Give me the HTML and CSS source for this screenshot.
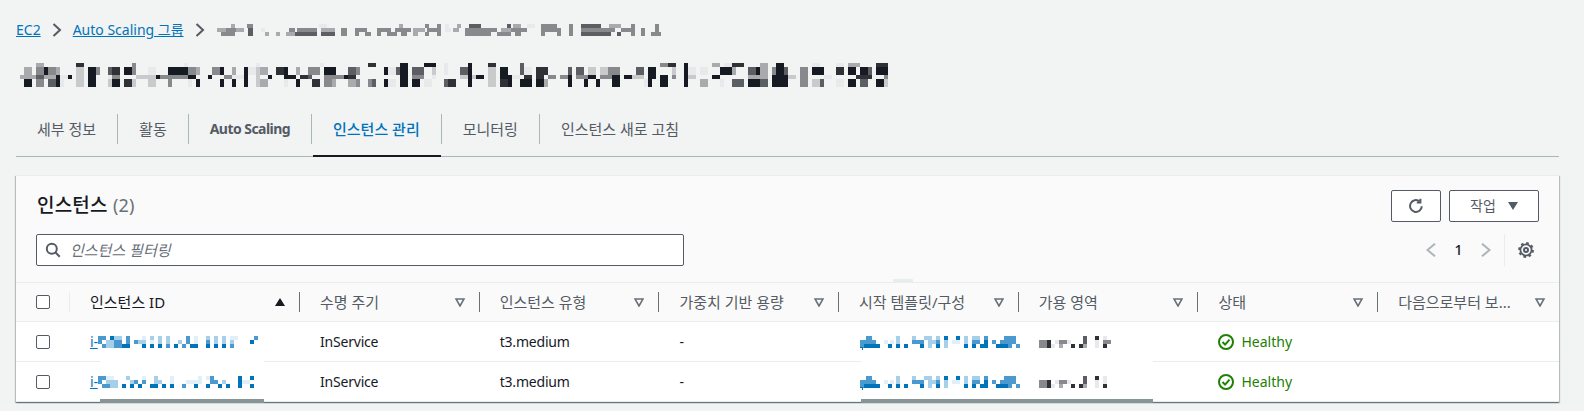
FILE: index.html
```html
<!DOCTYPE html>
<html lang="ko">
<head>
<meta charset="utf-8">
<title>인스턴스 관리</title>
<link rel="stylesheet" href="styles.css">
</head>
<body>
<nav class="crumbs">
  <a href="#">EC2</a>
  <svg class="crumb-sep" width="10" height="14" viewBox="0 0 10 14"><path d="M1.5 1l6.5 6-6.5 6"/></svg>
  <a href="#">Auto Scaling 그룹</a>
  <svg class="crumb-sep" width="10" height="14" viewBox="0 0 10 14"><path d="M1.5 1l6.5 6-6.5 6"/></svg>
  <svg class="mosaic crumb-mosaic" width="460" height="12" viewBox="0 0 460 12">
    <g class="w4">
      <path class="a" d="M108 2h8M234 2h4M316 2h8"/>
      <path class="c" d="M20 2h4M188 2h4M246 2h4M302 2h8M398 2h12"/>
      <path class="d" d="M36 2h6M214 2h4M226 2h4M330 2h16M358 2h4M420 2h4M444 2h4"/>
      <path class="e" d="M258 2h12M296 2h4M370 2h20"/>
      <path class="c" d="M6 6h9M25 6h8M110 6h14M202 6h12M242 6h6M290 6h10M398 6h6"/>
      <path class="d" d="M15 6h10M78 6h6M86 6h20M130 6h6M144 6h12M166 6h14M184 6h16M216 6h14M254 6h32M300 6h16M330 6h20M358 6h4M370 6h34M410 6h14M430 6h4M444 6h4"/>
      <path class="e" d="M37 6h5"/>
      <path class="a" d="M50 6h4M234 6h6"/>
      <path class="d" d="M10 10h14M130 10h6M144 10h4M154 10h6M166 10h4M176 10h10M190 10h6M214 10h4M226 10h4M254 10h26M286 10h14M304 10h6M330 10h4M346 10h4M358 10h4M420 10h4M430 10h4M440 10h10"/>
      <path class="e" d="M37 10h5M84 10h22M110 10h14M370 10h30M406 10h4"/>
      <path class="c" d="M54 10h4M65 10h4M75 10h9M202 10h5"/>
    </g>
  </svg>
</nav>
<h1 class="page-title" aria-label="Auto Scaling group">
  <svg class="mosaic" width="880" height="24" viewBox="0 0 880 24">
    <g class="w4">
      <path class="c" d="M20 2h8M744 2h8M832 2h12M696 2h8"/>
      <path class="d" d="M116 2h4M644 2h8"/>
      <path class="a" d="M168 2h4M240 2h4M304 2h4M428 2h4M708 2h8M796 2h8M820 2h8"/>
      <path class="e" d="M504 2h4"/>
      <path class="f" d="M60 2h8M352 2h8M472 2h8M652 2h8M716 2h12M860 2h12"/>
      <path class="g" d="M384 2h8M408 2h12M452 2h4M668 2h4M760 2h8"/>
    </g>
    <g class="w8">
      <path class="a" d="M132 8h8M232 8h8M372 8h8M428 8h4M508 8h8M672 8h8M684 8h8"/>
      <path class="b" d="M60 8h8M240 8h4M416 8h4M472 8h8M572 8h8M584 8h8M656 8h4"/>
      <path class="c" d="M8 8h8M40 8h4M180 8h4M216 8h4M244 8h8M280 8h4M716 8h4M744 8h8"/>
      <path class="d" d="M20 8h8M32 8h8M80 8h4M116 8h4M172 8h8M196 8h8M292 8h12M340 8h4M592 8h12M756 8h4M784 8h8"/>
      <path class="e" d="M92 8h4M332 8h8M380 8h4M396 8h12M444 8h8M504 8h4M552 8h4M560 8h8M620 8h8M732 8h8M768 8h4M852 8h4"/>
      <path class="f" d="M96 8h8M260 8h8M520 8h12M820 8h8"/>
      <path class="g" d="M28 8h4M72 8h8M108 8h8M152 8h20M204 8h4M228 8h4M268 8h4M308 8h12M368 8h4M384 8h8M452 8h4M484 8h8M632 8h8M668 8h4M704 8h12M740 8h4M760 8h8M796 8h12M832 8h8M844 8h8M860 8h12"/>
    </g>
    <g class="w4">
      <path class="a" d="M44 14h8M92 14h4M216 14h12M416 14h4M496 14h8M808 14h8"/>
      <path class="b" d="M60 14h8M120 14h20M240 14h4M444 14h8M456 14h4M472 14h8M616 14h12M672 14h8M772 14h8"/>
      <path class="c" d="M4 14h16M28 14h12M732 14h20"/>
      <path class="d" d="M96 14h8M144 14h28M208 14h8M308 14h20M396 14h12M532 14h8M544 14h8M560 14h12M584 14h12M656 14h4M784 14h8M868 14h4"/>
      <path class="e" d="M20 14h8M292 14h4"/>
      <path class="f" d="M284 14h8M332 14h8M508 14h8M520 14h8M840 14h16"/>
      <path class="g" d="M40 14h4M52 14h4M72 14h8M140 14h4M172 14h8M192 14h4M228 14h4M252 14h4M268 14h12M328 14h4M384 14h8M452 14h4M460 14h8M484 14h12M552 14h4M572 14h8M596 14h8M608 14h8M632 14h8M644 14h8M668 14h4M696 14h8M756 14h16"/>
    </g>
    <g class="w8">
      <path class="a" d="M44 20h4M172 20h4M268 20h4M372 20h8M408 20h8M628 20h4M704 20h4M820 20h8"/>
      <path class="b" d="M60 20h8M92 20h4M116 20h4M132 20h8M240 20h4M472 20h8M796 20h8M868 20h4"/>
      <path class="c" d="M244 20h8M316 20h4M332 20h8M528 20h4M684 20h8"/>
      <path class="d" d="M20 20h8M152 20h4M308 20h8M340 20h4M352 20h4M784 20h8"/>
      <path class="e" d="M32 20h8M356 20h4M428 20h4M716 20h12M744 20h8M804 20h4M844 20h8"/>
      <path class="f" d="M108 20h8M296 20h8M432 20h8M484 20h8"/>
      <path class="g" d="M8 20h8M40 20h4M72 20h8M96 20h8M180 20h4M204 20h4M216 20h4M228 20h4M280 20h4M368 20h4M384 20h8M396 20h8M452 20h4M492 20h4M504 20h12M520 20h8M552 20h4M568 20h4M580 20h4M596 20h8M632 20h4M644 20h8M668 20h4M732 20h12M756 20h16M832 20h8M860 20h8"/>
    </g>
  </svg>
</h1>
<ul class="tabs">
  <li class="tab"><span class="ko">세부 정보</span></li>
  <li class="tab"><span class="ko">활동</span></li>
  <li class="tab"><span class="tab-strong">Auto Scaling</span></li>
  <li class="tab tab-active"><span class="ko">인스턴스 관리</span></li>
  <li class="tab"><span class="ko">모니터링</span></li>
  <li class="tab tab-last"><span class="ko">인스턴스 새로 고침</span></li>
</ul>
<section class="card">
  <header class="card-head">
    <div class="head-row">
      <h2 class="card-title">인스턴스 <span class="count">(2)</span></h2>
      <div class="actions">
        <button class="btn btn-icon" aria-label="새로 고침">
          <svg width="16" height="16" viewBox="0 0 16 16"><path class="ico" d="M13.8 8.2a5.9 5.9 0 1 1-2.2-4.8"/><path class="ico" d="M12.4.8v3.6H8.8"/></svg>
        </button>
        <button class="btn btn-menu">작업
          <svg width="10" height="8" viewBox="0 0 10 8"><path class="solid" d="M0 0h10L5 8z"/></svg>
        </button>
      </div>
    </div>
    <div class="tool-row">
      <label class="search">
        <svg width="16" height="16" viewBox="0 0 16 16"><circle class="ico" cx="6.8" cy="6.8" r="5"/><path class="ico" d="M10.5 10.5l4.3 4.3"/></svg>
        <input class="search-input" placeholder="인스턴스 필터링">
      </label>
      <div class="pager">
        <svg class="chev" width="10" height="14" viewBox="0 0 10 14"><path d="M9 0.7L1.5 7 9 13.3"/></svg>
        <span class="page-num">1</span>
        <svg class="chev" width="10" height="14" viewBox="0 0 10 14"><path d="M1 0.7L8.5 7 1 13.3"/></svg>
        <span class="pager-div">
          <svg width="16" height="16" viewBox="0 0 16 16"><circle class="ico" cx="8" cy="8" r="2"/><circle class="ico thin" cx="8" cy="8" r="5.6"/><circle class="teeth" cx="8" cy="8" r="6.9"/></svg>
        </span>
      </div>
    </div>
  </header>
  <table class="grid">
    <colgroup>
      <col class="c-check"><col class="c-id"><col class="c-n"><col class="c-n"><col class="c-n"><col class="c-n"><col class="c-n"><col class="c-n"><col>
    </colgroup>
    <thead>
      <tr>
        <th><div class="th-box"><span class="check"></span></div></th>
        <th><div class="th-in th-sorted"><span class="ko">인스턴스 ID</span><svg width="10" height="8" viewBox="0 0 10 8"><path class="sorted" d="M5 0l5 8H0z"/></svg></div></th>
        <th><div class="th-in"><span class="ko">수명 주기</span><svg class="filter" width="10" height="9" viewBox="0 0 10 9"><path d="M1 1h8L5 8z"/></svg></div></th>
        <th><div class="th-in"><span class="ko">인스턴스 유형</span><svg class="filter" width="10" height="9" viewBox="0 0 10 9"><path d="M1 1h8L5 8z"/></svg></div></th>
        <th><div class="th-in"><span class="ko">가중치 기반 용량</span><svg class="filter" width="10" height="9" viewBox="0 0 10 9"><path d="M1 1h8L5 8z"/></svg></div></th>
        <th><div class="th-in"><span class="ko">시작 템플릿/구성</span><svg class="filter" width="10" height="9" viewBox="0 0 10 9"><path d="M1 1h8L5 8z"/></svg></div></th>
        <th><div class="th-in"><span class="ko">가용 영역</span><svg class="filter" width="10" height="9" viewBox="0 0 10 9"><path d="M1 1h8L5 8z"/></svg></div></th>
        <th><div class="th-in"><span class="ko">상태</span><svg class="filter" width="10" height="9" viewBox="0 0 10 9"><path d="M1 1h8L5 8z"/></svg></div></th>
        <th><div class="th-in th-last"><span class="ko">다음으로부터 보...</span><svg class="filter" width="10" height="9" viewBox="0 0 10 9"><path d="M1 1h8L5 8z"/></svg></div></th>
      </tr>
    </thead>
    <tbody>
      <tr>
        <td class="td-check"><span class="check"></span></td>
        <td><div class="cell-id"><a href="#">i-</a>
          <svg class="mosaic blue" width="164" height="12" viewBox="0 0 164 12"><g class="w4">
            <path class="m" d="M0 2h8M28 2h4M88 2h4M156 2h4M0 6h4M16 6h8M28 6h4M36 6h4M88 6h4M108 6h4M4 10h4M16 10h8M68 10h4M84 10h4M132 10h4"/>
            <path class="s" d="M12 2h4M152 6h4M24 10h8M44 10h4M52 10h4M60 10h4M76 10h4M92 10h8M108 10h4M116 10h4M124 10h4"/>
            <path class="l" d="M16 2h8M52 2h4M60 2h4M68 2h4M108 2h4M116 2h4M124 2h4M8 6h4M12 6h4M40 6h8M60 6h4M68 6h4M80 6h4M116 6h4M124 6h4M132 6h4M8 10h8"/>
            <path class="p" d="M44 2h4M96 2h4M132 2h8M52 6h4M96 6h4"/>
          </g></svg></div></td>
        <td>InService</td>
        <td>t3.medium</td>
        <td>-</td>
        <td><svg class="mosaic blue tpl" width="164" height="12" viewBox="0 0 164 12"><g class="w4">
            <path class="m" d="M6 2h6M124 2h4M144 2h12M0 6h16M52 6h12M76 6h4M112 6h8M132 6h4M140 6h16M0 10h4M148 10h4M156 10h4"/>
            <path class="s" d="M84 2h4M96 2h4M124 6h4M4 10h16M28 10h4M36 10h4M44 10h4M60 10h4M76 10h4M104 10h4M112 10h4M120 10h8M136 10h12"/>
            <path class="l" d="M36 2h4M52 2h4M64 2h8M76 2h4M104 2h4M112 2h8M36 6h4M68 6h8M84 6h4M104 6h4M68 10h4M84 10h4"/>
            <path class="p" d="M24 6h4M30 6h4M92 6h8"/>
          </g><path class="s-line" d="M0 11h2v3"/></svg></td>
        <td><svg class="mosaic" width="76" height="12" viewBox="0 0 76 12"><g class="w4">
            <path class="e" d="M44 2h4"/><path class="f" d="M56 2h4"/><path class="a" d="M64 2h4"/>
            <path class="d" d="M0 6h8M20 6h8M64 6h8"/><path class="f" d="M8 6h4"/><path class="a" d="M16 6h4M28 6h4M56 6h4"/><path class="e" d="M44 6h4"/>
            <path class="d" d="M0 10h8"/><path class="f" d="M8 10h4M32 10h4M40 10h4M64 10h4"/><path class="c" d="M20 10h4M44 10h4"/><path class="a" d="M56 10h4M12 10h4"/>
          </g></svg></td>
        <td><span class="health"><svg width="16" height="16" viewBox="0 0 16 16"><circle cx="8" cy="8" r="7"/><path d="M4.5 8l2.6 2.6 4.4-5"/></svg>Healthy</span></td>
        <td></td>
      </tr>
      <tr>
        <td class="td-check"><span class="check"></span></td>
        <td><div class="cell-id"><a href="#">i-</a>
          <svg class="mosaic blue" width="164" height="12" viewBox="0 0 164 12"><g class="w4">
            <path class="m" d="M0 2h8M112 2h4M0 6h4M36 6h4M44 6h4M112 6h8M4 10h8M84 10h4"/>
            <path class="s" d="M140 2h4M152 2h4M140 6h4M24 10h4M32 10h4M40 10h4M52 10h8M64 10h4M72 10h4M96 10h4M108 10h4M120 10h4M128 10h4M140 10h4M152 10h4"/>
            <path class="l" d="M28 2h4M56 2h4M8 6h12M32 6h4M56 6h8M124 6h4M12 10h8"/>
            <path class="p" d="M8 2h8M44 2h4M72 2h4M100 2h4M108 2h4M72 6h4M88 6h16M144 6h8"/>
          </g></svg></div></td>
        <td>InService</td>
        <td>t3.medium</td>
        <td>-</td>
        <td><svg class="mosaic blue tpl" width="164" height="12" viewBox="0 0 164 12"><g class="w4">
            <path class="m" d="M6 2h6M124 2h4M144 2h12M0 6h16M52 6h12M76 6h4M112 6h8M132 6h4M140 6h16M0 10h4M148 10h4M156 10h4"/>
            <path class="s" d="M84 2h4M96 2h4M124 6h4M4 10h16M28 10h4M36 10h4M44 10h4M60 10h4M76 10h4M104 10h4M112 10h4M120 10h8M136 10h12"/>
            <path class="l" d="M36 2h4M52 2h4M64 2h8M76 2h4M104 2h4M112 2h8M36 6h4M68 6h8M84 6h4M104 6h4M68 10h4M84 10h4"/>
            <path class="p" d="M24 6h4M30 6h4M92 6h8"/>
          </g><path class="s-line" d="M0 11h2v3"/></svg></td>
        <td><svg class="mosaic" width="76" height="12" viewBox="0 0 76 12"><g class="w4">
            <path class="e" d="M44 2h4"/><path class="f" d="M56 2h4"/><path class="a" d="M64 2h4"/>
            <path class="d" d="M0 6h8M20 6h8"/><path class="f" d="M8 6h4"/><path class="a" d="M16 6h4M28 6h4M56 6h4M64 6h4"/><path class="e" d="M44 6h4"/>
            <path class="d" d="M0 10h8"/><path class="f" d="M8 10h4M32 10h4M40 10h4M64 10h4"/><path class="c" d="M20 10h4M44 10h4"/><path class="a" d="M56 10h4M12 10h4"/>
          </g></svg></td>
        <td><span class="health"><svg width="16" height="16" viewBox="0 0 16 16"><circle cx="8" cy="8" r="7"/><path d="M4.5 8l2.6 2.6 4.4-5"/></svg>Healthy</span></td>
        <td></td>
      </tr>
    </tbody>
  </table>
  <span class="resize-tab"></span>
  <span class="mask mask-a"></span>
  <span class="mask mask-b"></span>
  <span class="bar bar-a"></span>
  <span class="bar bar-b"></span>
</section>
</body>
</html>
```
FILE: styles.css
```css
* { box-sizing: border-box; }
html, body { margin: 0; }
body {
  height: 411px;
  overflow: hidden;
  padding: 21px 25px 0 16px;
  background: #f2f3f3;
  color: #16191f;
  font: 14px/20px "Noto Sans", "Noto Sans CJK KR", sans-serif;
}
a { color: #0073bb; text-decoration: underline; }
.ko { font-size: 15px; }

.crumbs { display: flex; align-items: center; height: 18px; }
.crumb-sep { margin: 0 11px; fill: none; stroke: #545b64; stroke-width: 2; flex: none; }
.crumb-mosaic { margin-left: -5px; }

.mosaic { display: block; flex: none; shape-rendering: crispEdges; fill: none; overflow: visible; }
.tpl { margin-left: 1px; }
.w4 path { stroke-width: 4; }
.w8 path { stroke-width: 8; }
.a { stroke: #e8e9ea; }
.b { stroke: #c8cacc; }
.c { stroke: #a8aaad; }
.d { stroke: #87898c; }
.e { stroke: #5b5e63; }
.f { stroke: #2f3136; }
.g { stroke: #161a22; }
.s { stroke: #0073bb; }
.m { stroke: #4a9ad0; }
.l { stroke: #a6cfe9; }
.p { stroke: #e1eff8; }
.s-line { stroke: #0073bb; stroke-width: 1; }

.page-title { margin: 24px 0 0; height: 24px; }

.tabs {
  display: flex;
  list-style: none;
  margin: 23px 0 0;
  padding: 4px 0 0;
  height: 47px;
  border-bottom: 1px solid #aab7b8;
  position: relative;
}
.tab {
  height: 30px;
  padding: 0 21px;
  display: flex;
  align-items: center;
  border-right: 1px solid #aab7b8;
  color: #545b64;
  position: relative;
}
.tab-last { border-right: 0; }
.tab-strong { font-weight: 700; letter-spacing: -.55px; }
.tab-active { color: #0073bb; font-weight: 500; }
.tab-active::after {
  content: "";
  position: absolute;
  left: 1px;
  right: 0;
  top: 41px;
  height: 2px;
  background: #16191f;
}

.card {
  position: relative;
  margin-top: 18px;
  height: 227px;
  background: #fff;
  box-shadow: 0 1px 1px rgba(0, 28, 36, .35), 1px 1px 1px rgba(0, 28, 36, .2), -1px 1px 1px rgba(0, 28, 36, .2);
  border-top: 1px solid #eaeded;
}
.card-head { background: #fafafa; padding: 14px 20px 16px; height: 106px; }
.head-row { display: flex; justify-content: space-between; height: 32px; }
.card-title { margin: 0 0 0 1px; font-size: 19px; line-height: 30px; font-weight: 500; letter-spacing: .2px; }
.count { font-weight: 400; color: #687078; font-size: 18px; }
.actions { display: flex; gap: 8px; }
.btn {
  height: 32px;
  padding: 0;
  display: flex;
  align-items: center;
  justify-content: center;
  background: #fff;
  border: 1px solid #545b64;
  border-radius: 2px;
  color: #545b64;
  font: inherit;
}
.btn-icon { width: 50px; }
.btn-menu { width: 90px; gap: 12px; }
.ico { fill: none; stroke: #545b64; stroke-width: 2; }
.ico.thin { stroke-width: 1.8; }
.teeth { fill: none; stroke: #545b64; stroke-width: 2; stroke-dasharray: 2.6 2.82; }
.solid { fill: #545b64; }

.tool-row { display: flex; justify-content: space-between; margin-top: 12px; height: 32px; }
.search {
  width: 648px;
  display: flex;
  align-items: center;
  gap: 9px;
  padding: 0 8px;
  background: #fff;
  border: 1px solid #545b64;
  border-radius: 2px;
}
.search-input { flex: 1; border: 0; outline: 0; padding: 0; background: none; font: inherit; font-size: 15px; color: #16191f; }
.search-input::placeholder { color: #687078; font-style: italic; opacity: 1; }
.pager { display: flex; align-items: center; }
.chev { fill: none; stroke: #aab7b8; stroke-width: 2; }
.page-num { width: 45px; text-align: center; color: #16191f; font-size: 14px; font-weight: 500; }
.pager-div {
  display: flex;
  align-items: center;
  height: 32px;
  margin-left: 13px;
  padding-left: 13px;
  padding-right: 5px;
  border-left: 1px solid #eaeded;
}

.grid { width: 100%; table-layout: fixed; border-collapse: collapse; }
.c-check { width: 54px; }
.c-id { width: 230px; }
.c-n { width: 179.7px; }
.grid th {
  height: 39px;
  padding: 0;
  font-weight: 400;
  text-align: left;
  background: #fafafa;
  border-top: 1px solid #eaeded;
  border-bottom: 1px solid #eaeded;
  color: #545b64;
}
.th-box { display: flex; align-items: center; height: 20px; padding-left: 20px; border-right: 1px solid #eaeded; }
.th-in {
  display: flex;
  align-items: center;
  justify-content: space-between;
  height: 20px;
  padding: 0 14px 0 20px;
  border-right: 1px solid #687078;
  white-space: nowrap;
}
.th-sorted { color: #16191f; }
.th-last { border-right: 0; }
.sorted { fill: #16191f; }
.filter { fill: none; stroke: #687078; stroke-width: 1.6; flex: none; }
.check { display: block; width: 14px; height: 14px; background: #fff; border: 1px solid #545b64; border-radius: 2px; }
.grid td {
  height: 40px;
  padding: 0 0 0 20px;
  border-bottom: 1px solid #eaeded;
  vertical-align: middle;
  letter-spacing: -.2px;
}
.cell-id { display: flex; align-items: center; }
.health { display: flex; align-items: center; gap: 7px; color: #1d8102; letter-spacing: 0; }
.health svg { fill: none; stroke: #1d8102; stroke-width: 2; }

.resize-tab { position: absolute; left: 877px; top: 103px; width: 20px; height: 3px; background: #eaeded; }
.mask { position: absolute; top: 184px; height: 3px; background: #fff; }
.mask-a { left: 84px; width: 164px; }
.mask-b { left: 845px; width: 292px; }
.bar { position: absolute; top: 223px; height: 4px; background: #879596; }
.bar-a { left: 84px; width: 164px; }
.bar-b { left: 845px; width: 292px; }
```
